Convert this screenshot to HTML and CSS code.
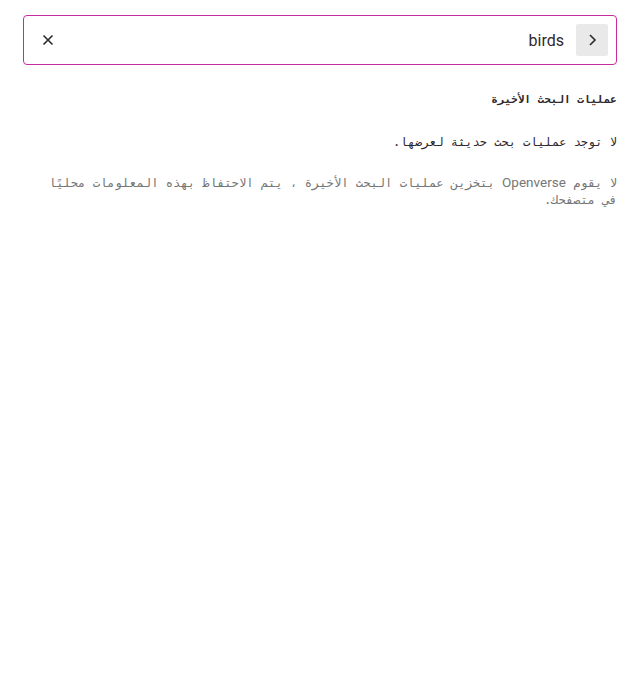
FILE: index.html
```html
<!DOCTYPE html>
<html lang="ar" dir="rtl">
<head>
<meta charset="utf-8">
<link rel="stylesheet" href="styles.css">
</head>
<body>
<div class="page">
  <div class="search">
    <button class="go" aria-label="search">
      <svg width="20" height="20" viewBox="0 0 20 20"><path d="M8 5l5 5-5 5" fill="none" stroke="#30272e" stroke-width="1.6"/></svg>
    </button>
    <span class="query" dir="ltr">birds</span>
    <span class="spacer"></span>
    <button class="clear" aria-label="clear">
      <svg width="12" height="12" viewBox="0 0 12 12"><path d="M1.5 1.5l9 9M10.5 1.5l-9 9" fill="none" stroke="#30272e" stroke-width="1.6"/></svg>
    </button>
  </div>
  <section class="recent">
    <h2 class="title">عمليات البحث الأخيرة</h2>
    <p class="empty">لا توجد عمليات بحث حديثة لعرضها.</p>
    <p class="note">لا يقوم <span class="latin">Openverse</span> بتخزين عمليات البحث الأخيرة ، يتم الاحتفاظ بهذه المعلومات محليًا في متصفحك.</p>
  </section>
</div>
</body>
</html>
```
FILE: styles.css
```css
html, body { margin: 0; padding: 0; background: #fff; }
body { font-family: Inter, "DejaVu Sans", sans-serif; color: #30272e; }
.page { padding: 15px 23px 0 23px; }
.search {
  display: flex; align-items: center;
  height: 50px; box-sizing: border-box;
  border: 1.5px solid #c52b9b; border-radius: 4px;
  padding: 0 8px 0 16px;
}
.go {
  width: 32px; height: 32px; border: 0; border-radius: 2px;
  background: #e9e9e9; display: flex; align-items: center; justify-content: center;
  padding: 0; margin: 0;
}
.query { font-family: Roboto, sans-serif; font-size: 16px; margin-right: 12px; color: #30272e; }
.spacer { flex: 1; }
.clear { border: 0; background: none; padding: 0; width: 16px; height: 16px; display: flex; align-items: center; justify-content: center; }
.recent { padding-top: 26px; font-family: "DejaVu Sans Mono", monospace; }
.title { font-size: 11px; font-weight: bold; margin: 0 0 24px 0; line-height: 18px; }
.empty { font-size: 12px; margin: 0 0 23px 0; line-height: 18px; }
.note { font-size: 12.15px; margin: 0; line-height: 17px; color: #767676; padding-left: 10px; }
.latin { font-family: Roboto, sans-serif; font-size: 13.5px; }
```
